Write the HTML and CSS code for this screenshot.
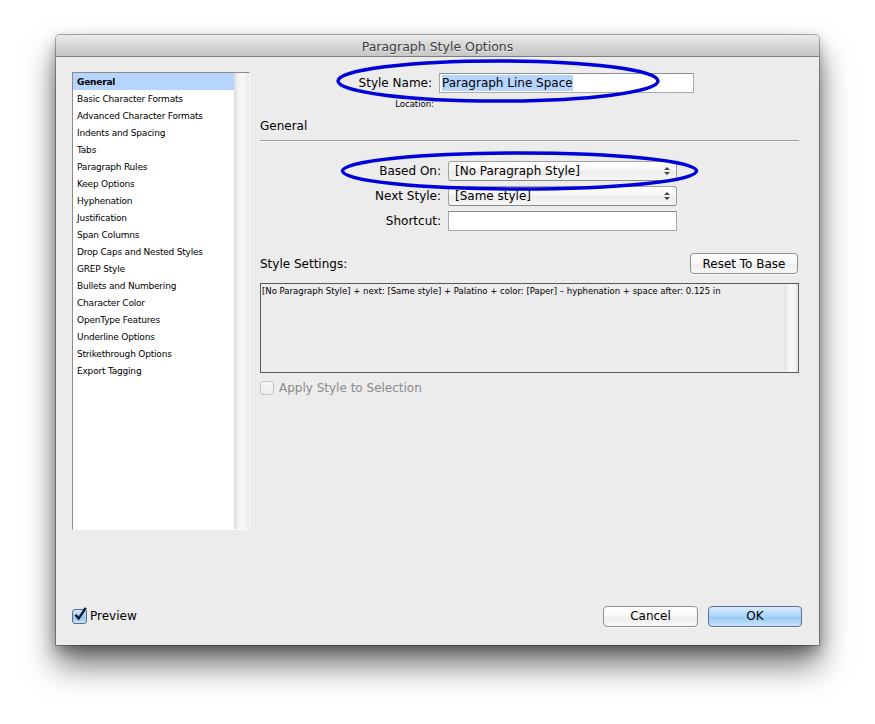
FILE: index.html
```html
<!DOCTYPE html>
<html>
<head>
<meta charset="utf-8">
<link rel="stylesheet" href="styles.css">
</head>
<body>
<div class="window">
  <div class="titlebar">Paragraph Style Options</div>
  <div class="body">
    <div class="main">
      <div class="listbox">
        <ul class="list">
          <li class="sel">General</li>
          <li>Basic Character Formats</li>
          <li>Advanced Character Formats</li>
          <li>Indents and Spacing</li>
          <li>Tabs</li>
          <li>Paragraph Rules</li>
          <li>Keep Options</li>
          <li>Hyphenation</li>
          <li>Justification</li>
          <li>Span Columns</li>
          <li>Drop Caps and Nested Styles</li>
          <li>GREP Style</li>
          <li>Bullets and Numbering</li>
          <li>Character Color</li>
          <li>OpenType Features</li>
          <li>Underline Options</li>
          <li>Strikethrough Options</li>
          <li>Export Tagging</li>
        </ul>
        <div class="vscroll"></div>
      </div>
      <div class="panel">
        <div class="namerow">
          <span class="namelabel">Style Name:</span>
          <div class="field namefield"><span class="hl">Paragraph Line Space</span></div>
        </div>
        <div class="location">Location:</div>
        <div class="heading">General</div>
        <div class="sep"></div>
        <div class="formrows">
          <div class="frow">
            <span class="flabel">Based On:</span>
            <div class="popup"><span>[No Paragraph Style]</span><span class="arrows"><i class="up"></i><i class="down"></i></span></div>
          </div>
          <div class="frow">
            <span class="flabel">Next Style:</span>
            <div class="popup"><span>[Same style]</span><span class="arrows"><i class="up"></i><i class="down"></i></span></div>
          </div>
          <div class="frow">
            <span class="flabel">Shortcut:</span>
            <div class="field shortcut"></div>
          </div>
        </div>
        <div class="settingshead">
          <span class="shlabel">Style Settings:</span>
          <button class="btn reset">Reset To Base</button>
        </div>
        <div class="settings">
          <div class="settext">[No Paragraph Style] + next: [Same style] + Palatino + color: [Paper] – hyphenation + space after: 0.125 in</div>
          <div class="setscroll"></div>
        </div>
        <div class="apply"><span class="cb off"></span><span class="applytext">Apply Style to Selection</span></div>
      </div>
    </div>
    <div class="footer">
      <div class="preview">
        <span class="cb on"><svg width="16" height="16" viewBox="0 0 16 16"><path d="M3.5 7.8 L6.6 11.6 L13.8 0.8" fill="none" stroke="#0d1a33" stroke-width="2.4" stroke-linejoin="miter"/></svg></span>
        <span class="prevtext">Preview</span>
      </div>
      <div class="buttons">
        <button class="btn cancel">Cancel</button>
        <button class="btn ok">OK</button>
      </div>
    </div>
  </div>
</div>
<svg class="marks" width="875" height="724" viewBox="0 0 875 724">
  <ellipse cx="498" cy="81" rx="160" ry="20" fill="none" stroke="#0000dc" stroke-width="3.5"/>
  <ellipse cx="519.5" cy="171" rx="177" ry="18" fill="none" stroke="#0000dc" stroke-width="3.5"/>
</svg>
</body>
</html>
```

FILE: styles.css
```css
html, body {
  margin: 0;
  padding: 0;
  background: #ffffff;
}
body {
  width: 875px;
  height: 724px;
  position: relative;
  overflow: hidden;
  font-family: "DejaVu Sans", "Liberation Sans", sans-serif;
  color: #000;
}
.window {
  margin: 35px 0 0 56px;
  width: 763px;
  height: 610px;
  background: #ececec;
  border-radius: 4px 4px 0 0;
  box-shadow: 0 0 0 1px rgba(0,0,0,0.3), 0 20px 32px rgba(0,0,0,0.55), 0 6px 14px rgba(0,0,0,0.3);
  display: flex;
  flex-direction: column;
}
.titlebar {
  height: 21px;
  line-height: 23px;
  text-align: center;
  font-size: 12.5px;
  color: #3c3c3c;
  background: linear-gradient(#ebebeb, #d6d6d6 50%, #c7c7c7);
  border-bottom: 1px solid #7d7d7d;
  border-radius: 4px 4px 0 0;
  text-shadow: 0 1px 0 rgba(255,255,255,0.6);
}
.body {
  flex: 1;
  display: flex;
  flex-direction: column;
  padding: 15px 17px 18px 16px;
}
.main {
  flex: 1;
  display: flex;
  gap: 10px;
}
.listbox {
  width: 176px;
  height: 456px;
  background: #fff;
  border-top: 1px solid #8c8c8c;
  border-left: 1px solid #8c8c8c;
  border-right: 1px solid #fafafa;
  border-bottom: 1px solid #fafafa;
  display: flex;
}
.list {
  list-style: none;
  margin: 0;
  padding: 0;
  flex: 1;
}
.list li {
  height: 17px;
  line-height: 19px;
  padding-left: 4px;
  font-size: 9px;
  letter-spacing: -0.2px;
  color: #000;
  white-space: nowrap;
}
.list li.sel {
  background: #b5d5ff;
  font-weight: bold;
}
.vscroll {
  width: 14px;
  background: linear-gradient(90deg, #e4e4e4, #f7f7f7 35%, #f5f5f5 70%, #e8e8e8);
  border-left: 1px solid #dcdcdc;
}
.panel {
  width: 539px;
  display: flex;
  flex-direction: column;
}
.namerow {
  display: flex;
  align-items: center;
  height: 20px;
  margin-top: 1px;
}
.namelabel {
  width: 172px;
  text-align: right;
  font-size: 12px;
  margin-right: 7px;
}
.field {
  background: #fff;
  border: 1px solid #a9a9a9;
  border-top-color: #8e8e8e;
  box-sizing: border-box;
}
.namefield {
  width: 255px;
  height: 20px;
  padding: 1px 0 0 2px;
  font-size: 12px;
  line-height: 16px;
}
.hl {
  background: #b5d5ff;
  display: inline-block;
  height: 16px;
}
.location {
  width: 174px;
  text-align: right;
  font-size: 8.5px;
  margin-top: 6px;
  height: 10px;
  line-height: 10px;
}
.heading {
  font-size: 12px;
  margin-top: 9px;
  height: 17px;
  line-height: 17px;
}
.sep {
  margin-top: 5px;
  height: 1px;
  background: #9e9e9e;
  border-bottom: 1px solid #f7f7f7;
}
.formrows {
  margin-top: 19px;
  display: flex;
  flex-direction: column;
  gap: 5px;
}
.frow {
  display: flex;
  align-items: center;
  height: 20px;
}
.flabel {
  width: 181px;
  text-align: right;
  margin-right: 7px;
  font-size: 12px;
}
.popup {
  width: 229px;
  height: 20px;
  box-sizing: border-box;
  border: 1px solid #a0a0a0;
  border-bottom-color: #8a8a8a;
  border-radius: 3px;
  background: linear-gradient(#ffffff, #f4f4f4 50%, #ececec 51%, #f6f6f6);
  display: flex;
  align-items: center;
  justify-content: space-between;
  padding: 0 6px 0 6px;
  font-size: 12px;
}
.arrows {
  display: flex;
  flex-direction: column;
  gap: 2px;
}
.arrows i {
  display: block;
  width: 0;
  height: 0;
  border-left: 3px solid transparent;
  border-right: 3px solid transparent;
}
.arrows .up { border-bottom: 3.5px solid #444; }
.arrows .down { border-top: 3.5px solid #444; }
.shortcut {
  width: 229px;
  height: 20px;
}
.settingshead {
  margin-top: 22px;
  display: flex;
  justify-content: space-between;
  align-items: center;
  height: 21px;
}
.shlabel {
  font-size: 12px;
  padding-top: 1px;
}
.btn {
  font-family: "DejaVu Sans", "Liberation Sans", sans-serif;
  font-size: 12px;
  color: #000;
  height: 21px;
  box-sizing: border-box;
  border: 1px solid #909090;
  border-radius: 4px;
  background: linear-gradient(#ffffff, #f6f6f6 50%, #ececec 51%, #f8f8f8);
  padding: 0;
  margin: 0;
  box-shadow: 0 1px 0 rgba(255,255,255,0.7);
}
.reset {
  width: 108px;
  margin-right: 1px;
}
.settings {
  margin-top: 9px;
  height: 88px;
  border: 1px solid #585858;
  background: #ececec;
  display: flex;
}
.settext {
  flex: 1;
  font-size: 8.5px;
  letter-spacing: 0;
  padding: 2px 0 0 1px;
  line-height: 10px;
  white-space: nowrap;
}
.setscroll {
  width: 14px;
  background: linear-gradient(90deg, #e4e4e4, #f7f7f7 40%, #f6f6f6 70%, #e6e6e6);
}
.apply {
  margin-top: 7px;
  display: flex;
  align-items: center;
  height: 16px;
}
.cb {
  display: inline-block;
  width: 14px;
  height: 14px;
  box-sizing: border-box;
  border-radius: 3px;
  position: relative;
}
.cb.off {
  border: 1px solid #c6c6c6;
  background: linear-gradient(#f6f6f6, #ececec);
}
.applytext {
  margin-left: 5px;
  font-size: 12px;
  color: #8a8a8a;
}
.footer {
  display: flex;
  justify-content: space-between;
  align-items: center;
  height: 22px;
}
.preview {
  display: flex;
  align-items: center;
}
.cb.on {
  width: 15px;
  height: 15px;
  border: 1px solid #5a6c8e;
  background: linear-gradient(#d6e8fb, #9fc7ef 50%, #8ebde9 51%, #cbe4fb);
}
.cb.on svg {
  position: absolute;
  left: -1px;
  top: -3px;
}
.prevtext {
  margin-left: 3px;
  font-size: 12px;
}
.buttons {
  display: flex;
  gap: 10px;
}
.cancel {
  width: 95px;
}
.ok {
  width: 94px;
  border-color: #5d6c93;
  background: linear-gradient(#d9edfd, #a9d3f8 50%, #93c7f5 51%, #c7e5fd);
}
.marks {
  position: absolute;
  left: 0;
  top: 0;
  pointer-events: none;
}
```
